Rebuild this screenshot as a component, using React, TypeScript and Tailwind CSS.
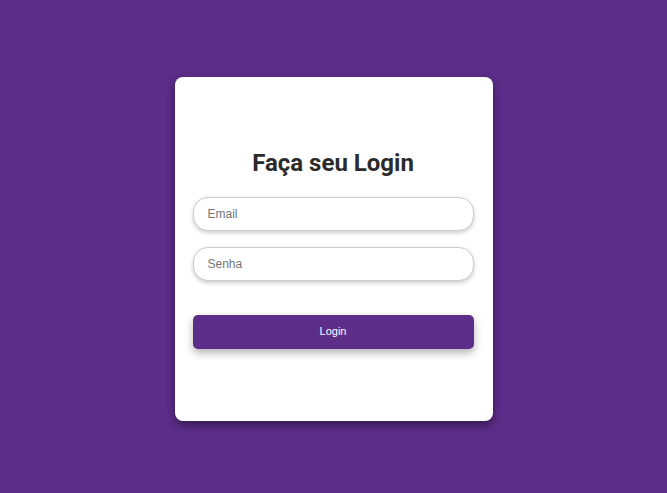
export default function App() {
  return (
    <div className="min-h-screen w-full bg-[#5c2d89] pt-[4px] flex items-center justify-center font-['Liberation_Sans',Arial,sans-serif]">
      {/* Card */}
      <div className="w-[318px] h-[344px] bg-white rounded-lg shadow-[0_4px_8px_rgba(0,0,0,0.45)] pl-[18px] pr-[19px] flex flex-col justify-center">
        <h1 className="font-['Roboto',sans-serif] font-bold text-[24px] leading-[28px] text-[#2b2b2b] text-center mb-[20px]">
          Faça seu Login
        </h1>
        <input
          type="email"
          placeholder="Email"
          className="h-[34px] w-full rounded-[15px] border border-[#cccccc] bg-white px-[14px] text-[12px] text-[#333] placeholder:text-[#757575] shadow-[0_2px_4px_rgba(0,0,0,0.2)] outline-none"
        />
        <input
          type="password"
          placeholder="Senha"
          className="mt-4 h-[34px] w-full rounded-[15px] border border-[#cccccc] bg-white px-[14px] text-[12px] text-[#333] placeholder:text-[#757575] shadow-[0_2px_4px_rgba(0,0,0,0.2)] outline-none"
        />
        <button className="mt-[34px] h-[34px] w-full rounded-[5px] bg-[#5c2d89] text-white text-[11px] shadow-[0_4px_8px_rgba(0,0,0,0.3)]">
          Login
        </button>
      </div>
    </div>
  );
}
